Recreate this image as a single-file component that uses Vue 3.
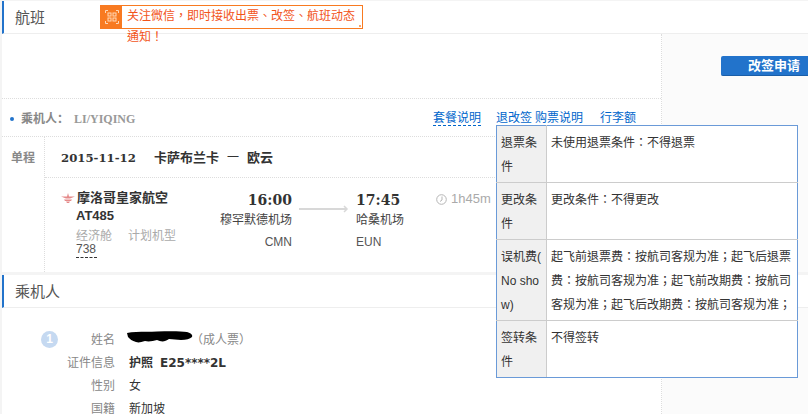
<script setup>
const rules = [
  { k: '退票条件', v: '未使用退票条件：不得退票' },
  { k: '更改条件', v: '更改条件：不得更改' },
  { k: '误机费(No show)', v: '起飞前退票费：按航司客规为准；起飞后退票费：按航司客规为准；起飞前改期费：按航司客规为准；起飞后改期费：按航司客规为准；' },
  { k: '签转条件', v: '不得签转' }
]
</script>

<template>
  <div class="page">
    <section class="card">
      <header class="head">
        <h2>航班</h2>
        <div class="notice">
          <span class="qr">
            <svg width="14" height="14" viewBox="0 0 14 14" fill="none" stroke="#ffd9b8" stroke-width="1">
              <path d="M.5 3V.5H3M11 .5h2.500V3M13.500 11v2.500H11M3 13.500H.5V11" />
              <rect x="3" y="3" width="3" height="3" />
              <rect x="8" y="3" width="3" height="3" />
              <rect x="3" y="8" width="3" height="3" />
              <rect x="8" y="8" width="3" height="3" />
            </svg>
          </span>
          <p>关注微信，即时接收出票、改签、航班动态通知！</p>
        </div>
      </header>
      <div class="split">
        <div class="main">
          <div class="blank"></div>
          <div class="pax">
            <div class="pax-name"><i></i><b>乘机人：</b><b class="serif">LI/YIQING</b></div>
            <nav>
              <a class="dash">套餐说明</a>
              <a class="first">退改签</a>
              <a class="second">购票说明</a>
              <a class="third">行李额</a>
            </nav>
          </div>
          <div class="trip">
            <div class="trip-type">单程</div>
            <div class="trip-body">
              <div class="route">
                <b class="date">2015-11-12</b>
                <b class="cities">卡萨布兰卡</b>
                <b class="sep">一</b>
                <b class="cities">欧云</b>
              </div>
              <div class="leg">
                <div class="airline">
                  <div class="air-name">
                    <svg width="14" height="10" viewBox="0 0 14 10" fill="#e58a8a">
                      <path d="M7 0 8 3.500 14 3.500 9 5.500 7 5.500 5 5.500 0 3.500 6 3.500Z" />
                      <path d="M3 6.500h8L10 8H4ZM5 8.500h4L8 10H6Z" />
                    </svg>
                    <b>摩洛哥皇家航空</b>
                  </div>
                  <b class="no">AT485</b>
                  <div class="cabin"><span>经济舱</span><span>计划机型</span></div>
                  <span class="plane">738</span>
                </div>
                <div class="dep">
                  <b class="time">16:00</b>
                  <span>穆罕默德机场</span>
                  <span class="code">CMN</span>
                </div>
                <svg class="arrow" width="50" height="10" viewBox="0 0 50 10" fill="none" stroke="#d8d8d8">
                  <path d="M0 5h48" stroke-width="2" />
                  <path d="M45 2l3 3-3 3" stroke-width="1.500" />
                </svg>
                <div class="arr">
                  <b class="time">17:45</b>
                  <span>哈桑机场</span>
                  <span class="code">EUN</span>
                </div>
                <div class="dur">
                  <svg width="11" height="11" viewBox="0 0 11 11" fill="none" stroke="#b5b5b5">
                    <circle cx="5.500" cy="5.500" r="4.800" />
                    <path d="M6 2.500V6L4 7.500" />
                  </svg>
                  <span>1h45m</span>
                </div>
              </div>
            </div>
          </div>
        </div>
        <aside class="side"><button>改签申请</button></aside>
      </div>
    </section>

    <section class="card second-card">
      <header class="head"><h2>乘机人</h2></header>
      <div class="split">
        <div class="main people">
          <span class="badge">1</span>
          <dl>
            <div class="line">
              <dt>姓名</dt>
              <dd class="named">
                <svg class="blob" width="66" height="12" viewBox="0 0 66 12" fill="#000">
                  <path d="M0 2C8 0 20 1 30 .5 42 0 54 0 60 1c4 1 6 3 5 5-2 2-6 3-11 3L42 8c-4 3-8 3-12 1-4 1-8 2-12 1-4 1-6 2-9 1C5 10 3 8 1 6Z" />
                </svg>
                <span class="adult">（成人票）</span>
              </dd>
            </div>
            <div class="line"><dt>证件信息</dt><dd class="doc"><b>护照</b><b class="num">E25****2L</b></dd></div>
            <div class="line"><dt>性别</dt><dd>女</dd></div>
            <div class="line"><dt>国籍</dt><dd>新加坡</dd></div>
          </dl>
        </div>
        <aside class="side"></aside>
      </div>
    </section>

    <table class="rules">
      <tbody>
        <tr v-for="r in rules" :key="r.k">
          <th>{{ r.k }}</th>
          <td>{{ r.v }}</td>
        </tr>
      </tbody>
    </table>
  </div>
</template>

<style>
html, body { margin: 0; background: #f4f4f4; }
</style>

<style scoped>
.page {
  position: relative;
  width: 808px;
  height: 414px;
  overflow: hidden;
  padding: 1px 0 0 2px;
  box-sizing: border-box;
  background: #f4f4f4;
  font: 12px/18px "Liberation Sans", "Noto Sans CJK SC", sans-serif;
  color: #333;
}
.card { background: #fff; }
.second-card { margin-top: 3px; }
.head {
  display: flex;
  align-items: flex-start;
  height: 32px;
  border-left: 2px solid #2273cb;
  border-bottom: 1px solid #eee;
  box-sizing: content-box;
  background: #fff;
}
.head h2 {
  margin: 0;
  padding-left: 11px;
  font-size: 15px;
  font-weight: 400;
  line-height: 33px;
  color: #555;
}
.notice {
  position: relative;
  display: flex;
  width: 263px;
  height: 24px;
  margin: 4px 0 0 55px;
  border: 1px solid #f87a21;
  box-sizing: border-box;
}
.notice::after {
  content: "";
  position: absolute;
  right: 1px;
  bottom: 1px;
  width: 2px;
  height: 2px;
  background: #f9a468;
}
.qr {
  flex: none;
  display: flex;
  align-items: center;
  justify-content: center;
  width: 21px;
  background: #f87a21;
}
.notice p {
  margin: 0;
  padding-left: 5px;
  width: 240px;
  flex: none;
  line-height: 21px;
  color: #f2541b;
  box-sizing: border-box;
  font-family: "Liberation Sans", "Noto Sans CJK TC", sans-serif;
}
.split { display: flex; }
.main {
  width: 660px;
  flex: none;
  box-sizing: border-box;
  border-right: 1px dotted #ddd;
}
.side { flex: 1; background: #fbfbfb; padding-top: 22px; }
.side button {
  display: block;
  width: 100%;
  height: 20px;
  margin-left: 59px;
  padding: 1px 0 0 27px;
  border: 0;
  border-bottom: 1px solid #1a5ea8;
  border-radius: 2px 0 0 2px;
  background: #2273cb;
  color: #fff;
  font: bold 13px/18px "Liberation Sans", "Noto Sans CJK SC", sans-serif;
  text-align: left;
  white-space: nowrap;
}
.blank { height: 64px; border-bottom: 1px dotted #ddd; }
.pax {
  display: flex;
  height: 35px;
  padding: 2px 25px 0 0;
  box-sizing: content-box;
  align-items: center;
  justify-content: space-between;
  border-bottom: 1px dotted #ddd;
}
.pax-name { display: flex; align-items: center; color: #888; }
.pax-name i {
  width: 4px;
  height: 4px;
  margin: 0 7px 0 8px;
  border-radius: 50%;
  background: #2273cb;
}
.serif { font-family: "Liberation Serif", serif; font-size: 12px; margin-left: 5px; color: #999; }
nav { display: flex; color: #0066cc; }
nav a { white-space: nowrap; line-height: 14px; }
.dash { border-bottom: 1px dashed #0066cc; margin-right: 15px; }
.second { margin-left: 3px; margin-right: 17px; }
.trip { display: flex; height: 135px; }
.trip-type {
  width: 43px;
  flex: none;
  box-sizing: border-box;
  padding: 12px 0 0 9px;
  font-weight: 700;
  color: #888;
  border-right: 1px dotted #ddd;
}
.trip-body { flex: 1; }
.route {
  display: flex;
  height: 41px;
  align-items: center;
  box-sizing: border-box;
  padding: 1px 0 0 16px;
  border-bottom: 1px dotted #ddd;
  color: #333;
  white-space: nowrap;
}
.date { width: 93px; font: bold 11.700px "DejaVu Serif", serif; }
.cities { font-size: 13px; }
.sep { margin: 0 8px; font-weight: 400; }
.leg { display: flex; padding-top: 11px; }
.airline { width: 174px; flex: none; padding-left: 16px; box-sizing: border-box; }
.air-name { display: flex; align-items: center; gap: 2px; font-size: 13px; height: 18px; }
.air-name b { font-size: 13px; color: #333; }
.no { display: block; padding: 1px 0 0 15px; font-size: 13px; line-height: 16px; color: #333; }
.cabin { display: flex; gap: 16px; padding: 1px 0 0 15px; color: #aaa; line-height: 22px; }
.plane {
  display: block;
  width: 21px;
  margin: -4px 0 0 15px;
  padding-bottom: 2px;
  line-height: 12px;
  border-bottom: 1px dashed #333;
  color: #555;
}
.dep, .arr { display: flex; flex-direction: column; width: 73px; flex: none; color: #444; }
.dep { align-items: flex-end; }
.arr { width: 78px; }
.time {
  font: bold 14px/22px "DejaVu Serif", serif;
  color: #333;
}
.code { line-height: 26px; color: #555; }
.arrow { flex: none; margin: 15px 7px 0 7px; }
.dur { display: flex; align-items: center; gap: 4px; height: 20px; margin-left: 2px; color: #aaa; font-size: 13px; white-space: nowrap; }
.people { display: flex; height: 106px; padding-top: 20px; }
.badge {
  flex: none;
  width: 17px;
  height: 17px;
  margin: 3px 0 0 39px;
  border-radius: 50%;
  background: #c5d9f1;
  color: #fff;
  font: bold 12px/17px "Liberation Sans", sans-serif;
  text-align: center;
}
dl { margin: 0; }
.line { display: flex; height: 23px; align-items: center; }
dt { width: 57px; text-align: right; color: #888; }
dd { margin: 0 0 0 14px; color: #333; }
.named { position: relative; display: flex; padding-left: 62px; }
.blob {
  position: absolute;
  left: -2px;
  top: 0;
}
.adult { color: #888; }
.doc { display: flex; }
.num { margin-left: 7px; font-family: "DejaVu Sans", sans-serif; }
.rules {
  position: absolute;
  left: 496px;
  top: 125px;
  width: 302px;
  table-layout: fixed;
  border-collapse: collapse;
  border: 1px solid #6a9ad8;
  background: #fff;
  line-height: 24px;
  font-family: "Liberation Sans", "Noto Sans CJK TC", sans-serif;
}
.rules th, .rules td {
  padding: 5px 4px 3px;
  border: 1px solid #ccc;
  text-align: left;
  vertical-align: top;
  font-weight: 400;
  word-break: break-all;
  line-break: anywhere;
}
.rules th { width: 41px; background: #f0f0f0; }
.rules tr:first-child th, .rules tr:first-child td { border-top-color: #6a9ad8; }
.rules tr:last-child th, .rules tr:last-child td { border-bottom-color: #6a9ad8; }
.rules th { border-left-color: #6a9ad8; }
.rules td { border-right-color: #6a9ad8; }
</style>
